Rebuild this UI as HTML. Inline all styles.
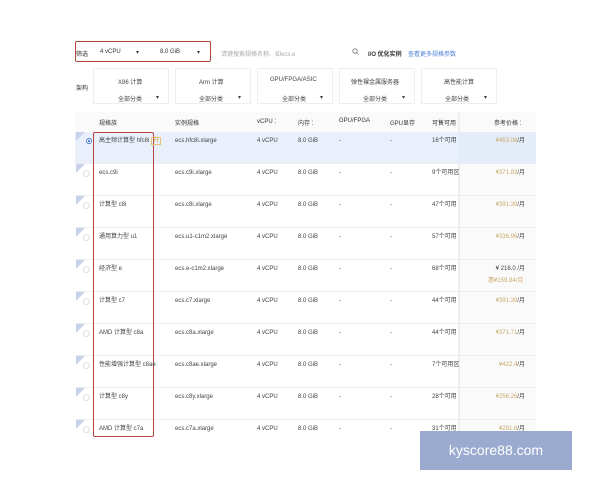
<!DOCTYPE html>
<html><head><meta charset="utf-8"><style>
*{margin:0;padding:0;box-sizing:border-box}
body{width:600px;height:480px;background:#fff;font-family:"Liberation Sans","Noto Sans CJK SC",sans-serif;font-size:6px;color:#444;position:relative;overflow:hidden}
.a{position:absolute;white-space:nowrap}
.box{position:absolute;border:1px solid #eee;background:#fff}
.row{position:absolute;left:75px;width:460px;height:32px;border-bottom:1px solid #eee}
.g{color:#c9a96b}
.tri{position:absolute;left:76px;width:0;height:0;border-top:9px solid #c8d2ea;border-right:9px solid transparent}
.rad{position:absolute;left:83px;width:7px;height:7px;border:1px solid #ddd;border-radius:50%;background:#fff}
</style></head><body>
<div class="a" style="left:76px;top:49px;color:#333">筛选</div>
<div class="a" style="left:75px;top:41px;width:136px;height:21px;border:1.5px solid #b5483a;border-radius:2px"></div>
<div class="a" style="left:100px;top:49px;color:#333">4 vCPU</div><div class="a" style="left:136px;top:49px">▾</div>
<div class="a" style="left:160px;top:49px;color:#333">8.0 GiB</div><div class="a" style="left:197px;top:49px">▾</div>
<div class="a" style="left:221px;top:49px;color:#aaa">请键搜索规格名称、如ecs.e</div>
<svg class="a" style="left:352px;top:48px" width="7" height="7" viewBox="0 0 7 7"><circle cx="3" cy="3" r="2.2" fill="none" stroke="#777" stroke-width="0.8"/><path d="M4.6 4.6L6.5 6.5" stroke="#777" stroke-width="0.8"/></svg>
<div class="a" style="left:368px;top:49px;color:#333;font-weight:bold">I/O 优化实例</div>
<div class="a" style="left:408px;top:49px;color:#4a7fd4">查看更多规格参数</div>
<div class="a" style="left:76px;top:83px;color:#333">架构</div>
<div class="box" style="left:93px;top:68px;width:76px;height:36px"></div>
<div class="box" style="left:175px;top:68px;width:76px;height:36px"></div>
<div class="box" style="left:257px;top:68px;width:76px;height:36px"></div>
<div class="box" style="left:339px;top:68px;width:76px;height:36px"></div>
<div class="box" style="left:421px;top:68px;width:76px;height:36px"></div>
<div class="a" style="left:118px;top:77px">X86 计算</div><div class="a" style="left:118px;top:94px">全部分类</div><div class="a" style="left:156px;top:94px">▾</div>
<div class="a" style="left:199px;top:77px">Arm 计算</div><div class="a" style="left:199px;top:94px">全部分类</div><div class="a" style="left:238px;top:94px">▾</div>
<div class="a" style="left:270px;top:77px">GPU/FPGA/ASIC</div><div class="a" style="left:282px;top:94px">全部分类</div><div class="a" style="left:320px;top:94px">▾</div>
<div class="a" style="left:351px;top:77px">弹性裸金属服务器</div><div class="a" style="left:363px;top:94px">全部分类</div><div class="a" style="left:402px;top:94px">▾</div>
<div class="a" style="left:444px;top:77px">高性能计算</div><div class="a" style="left:445px;top:94px">全部分类</div><div class="a" style="left:484px;top:94px">▾</div>
<div class="a" style="left:75px;top:112px;width:460px;height:20px;background:#fafafa"></div>
<div class="a" style="left:458px;top:112px;width:78px;height:324px;background:#fafafa;border-left:2px solid #eee"></div>
<div class="a" style="left:99px;top:118px;color:#333">规格族</div>
<div class="a" style="left:175px;top:118px;color:#333">实例规格</div>
<div class="a" style="left:257px;top:118px;color:#333">vCPU ⁚</div>
<div class="a" style="left:298px;top:118px;color:#333">内存 ⁚</div>
<div class="a" style="left:339px;top:118px;color:#333">GPU/FPGA</div>
<div class="a" style="left:390px;top:118px;color:#333">GPU显存</div>
<div class="a" style="left:432px;top:118px;color:#333">可售可用</div>
<div class="a" style="left:494px;top:118px;color:#333">参考价格 ⁚</div>
<div class="row" style="top:132px;background:#e9f0fb"></div>
<div class="row" style="top:164px"></div><div class="row" style="top:196px"></div><div class="row" style="top:228px"></div><div class="row" style="top:260px"></div><div class="row" style="top:292px"></div><div class="row" style="top:324px"></div><div class="row" style="top:356px"></div><div class="row" style="top:388px"></div><div class="row" style="top:420px;height:16px;border:none"></div>
<div class="a" style="left:458px;top:132px;width:78px;height:32px;background:#e4ecf8"></div>
<div class="tri" style="top:132px"></div><div class="tri" style="top:164px"></div><div class="tri" style="top:196px"></div><div class="tri" style="top:228px"></div><div class="tri" style="top:260px"></div><div class="tri" style="top:292px"></div><div class="tri" style="top:324px"></div><div class="tri" style="top:356px"></div><div class="tri" style="top:388px"></div><div class="tri" style="top:420px"></div>
<div class="rad" style="top:170px"></div><div class="rad" style="top:202px"></div><div class="rad" style="top:234px"></div><div class="rad" style="top:266px"></div><div class="rad" style="top:298px"></div><div class="rad" style="top:330px"></div><div class="rad" style="top:362px"></div><div class="rad" style="top:394px"></div><div class="rad" style="top:426px"></div>
<div class="a" style="left:86px;top:138px;width:6px;height:6px;border:1.5px solid #4a7fd4;border-radius:50%;background:radial-gradient(#4a7fd4 35%,#fff 45%)"></div>
<div class="a" style="left:93px;top:132px;width:61px;height:305px;border:1.5px solid #b5483a;border-radius:2px"></div>
<div class="a" style="left:99px;top:125px;line-height:32px">高主频计算型 hfc8i <span style="color:#d9a040;border:1px solid #e8c07a;padding:0 1px;line-height:8px">升</span><br>ecs.c9i<br>计算型 c8i<br>通用算力型 u1<br>经济型 e<br>计算型 c7<br>AMD 计算型 c8a<br>性能增强计算型 c8ae<br>计算型 c8y<br>AMD 计算型 c7a</div>
<div class="a" style="left:175px;top:125px;line-height:32px">ecs.hfc8i.xlarge<br>ecs.c9i.xlarge<br>ecs.c8i.xlarge<br>ecs.u1-c1m2.xlarge<br>ecs.e-c1m2.xlarge<br>ecs.c7.xlarge<br>ecs.c8a.xlarge<br>ecs.c8ae.xlarge<br>ecs.c8y.xlarge<br>ecs.c7a.xlarge</div>
<div class="a" style="left:257px;top:125px;line-height:32px">4 vCPU<br>4 vCPU<br>4 vCPU<br>4 vCPU<br>4 vCPU<br>4 vCPU<br>4 vCPU<br>4 vCPU<br>4 vCPU<br>4 vCPU</div>
<div class="a" style="left:298px;top:125px;line-height:32px">8.0 GiB<br>8.0 GiB<br>8.0 GiB<br>8.0 GiB<br>8.0 GiB<br>8.0 GiB<br>8.0 GiB<br>8.0 GiB<br>8.0 GiB<br>8.0 GiB</div>
<div class="a" style="left:339px;top:125px;line-height:32px">-<br>-<br>-<br>-<br>-<br>-<br>-<br>-<br>-<br>-</div>
<div class="a" style="left:390px;top:125px;line-height:32px">-<br>-<br>-<br>-<br>-<br>-<br>-<br>-<br>-<br>-</div>
<div class="a" style="left:432px;top:125px;line-height:32px">16个可用<br>9个可用区<br>47个可用<br>57个可用<br>68个可用<br>44个可用<br>44个可用<br>7个可用区<br>28个可用<br>31个可用</div>
<div class="a" style="left:470px;top:125px;width:55px;text-align:right;line-height:32px"><span class="g">¥453.08</span>/月<br><span class="g">¥371.83</span>/月<br><span class="g">¥391.39</span>/月<br><span class="g">¥336.96</span>/月<br>¥ 216.0 /月<br><span class="g">¥391.39</span>/月<br><span class="g">¥371.71</span>/月<br><span class="g">¥422.4</span>/月<br><span class="g">¥256.26</span>/月<br><span class="g">¥281.6</span>/月</div>
<div class="a g" style="left:488px;top:275px">惠¥159.84/月</div>
<div class="a" style="left:420px;top:431px;width:152px;height:39px;background:#9aabcf;color:#fff;font-size:14px;line-height:39px;text-align:center">kyscore88.com</div>
</body></html>
